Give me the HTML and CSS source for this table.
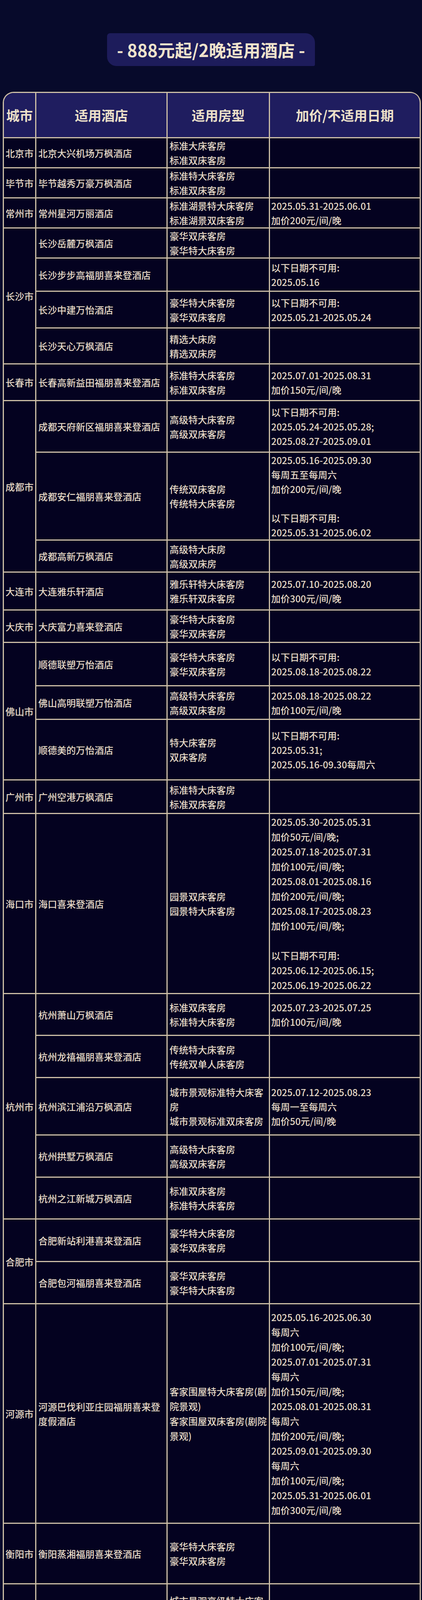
FILE: index.html
```html
<!DOCTYPE html>
<html lang="zh-CN">
<head>
<meta charset="utf-8">
<title>888元起/2晚适用酒店</title>
<link rel="stylesheet" href="styles.css">
</head>
<body>
<div class="page">
  <div class="title">- 888元起/2晚适用酒店 -</div>
  <table class="list">
    <colgroup>
      <col class="c-city"><col class="c-hotel"><col class="c-room"><col class="c-date">
    </colgroup>
    <thead>
      <tr class="head"><th>城市</th><th>适用酒店</th><th>适用房型</th><th>加价/不适用日期</th></tr>
    </thead>
    <tbody>
      <tr class="h73"><td class="city">北京市</td><td>北京大兴机场万枫酒店</td><td>标准大床客房<br>标准双床客房</td><td></td></tr>
      <tr class="h76"><td class="city">毕节市</td><td>毕节越秀万豪万枫酒店</td><td>标准特大床客房<br>标准双床客房</td><td></td></tr>
      <tr class="h76"><td class="city">常州市</td><td>常州星河万丽酒店</td><td>标准湖景特大床客房<br>标准湖景双床客房</td><td>2025.05.31-2025.06.01<br>加价200元/间/晚</td></tr>

      <tr class="h76"><td class="city" rowspan="4">长沙市</td><td>长沙岳麓万枫酒店</td><td>豪华双床客房<br>豪华特大床客房</td><td></td></tr>
      <tr class="h85"><td>长沙步步高福朋喜来登酒店</td><td></td><td>以下日期不可用:<br>2025.05.16</td></tr>
      <tr class="h94"><td>长沙中建万怡酒店</td><td>豪华特大床客房<br>豪华双床客房</td><td>以下日期不可用:<br>2025.05.21-2025.05.24</td></tr>
      <tr class="h92"><td>长沙天心万枫酒店</td><td>精选大床房<br>精选双床房</td><td></td></tr>

      <tr class="h94"><td class="city">长春市</td><td>长春高新益田福朋喜来登酒店</td><td>标准特大床客房<br>标准双床客房</td><td>2025.07.01-2025.08.31<br>加价150元/间/晚</td></tr>

      <tr class="h132"><td class="city" rowspan="3">成都市</td><td>成都天府新区福朋喜来登酒店</td><td>高级特大床客房<br>高级双床客房</td><td>以下日期不可用:<br>2025.05.24-2025.05.28;<br>2025.08.27-2025.09.01</td></tr>
      <tr class="h225"><td>成都安仁福朋喜来登酒店</td><td>传统双床客房<br>传统特大床客房</td><td>2025.05.16-2025.09.30<br>每周五至每周六<br>加价200元/间/晚<br><br>以下日期不可用:<br>2025.05.31-2025.06.02</td></tr>
      <tr class="h82"><td>成都高新万枫酒店</td><td>高级特大床房<br>高级双床房</td><td></td></tr>

      <tr class="h97"><td class="city">大连市</td><td>大连雅乐轩酒店</td><td>雅乐轩特大床客房<br>雅乐轩双床客房</td><td>2025.07.10-2025.08.20<br>加价300元/间/晚</td></tr>
      <tr class="h83"><td class="city">大庆市</td><td>大庆富力喜来登酒店</td><td>豪华特大床客房<br>豪华双床客房</td><td></td></tr>

      <tr class="h111"><td class="city" rowspan="3">佛山市</td><td>顺德联塑万怡酒店</td><td>豪华特大床客房<br>豪华双床客房</td><td>以下日期不可用:<br>2025.08.18-2025.08.22</td></tr>
      <tr class="h86"><td>佛山高明联塑万怡酒店</td><td>高级特大床客房<br>高级双床客房</td><td>2025.08.18-2025.08.22<br>加价100元/间/晚</td></tr>
      <tr class="h155"><td>顺德美的万怡酒店</td><td>特大床客房<br>双床客房</td><td>以下日期不可用:<br>2025.05.31;<br>2025.05.16-09.30每周六</td></tr>

      <tr class="h86"><td class="city">广州市</td><td>广州空港万枫酒店</td><td>标准特大床客房<br>标准双床客房</td><td></td></tr>
      <tr class="h461"><td class="city">海口市</td><td>海口喜来登酒店</td><td>园景双床客房<br>园景特大床客房</td><td class="tall">2025.05.30-2025.05.31<br>加价50元/间/晚;<br>2025.07.18-2025.07.31<br>加价100元/间/晚;<br>2025.08.01-2025.08.16<br>加价200元/间/晚;<br>2025.08.17-2025.08.23<br>加价100元/间/晚;<br><br>以下日期不可用:<br>2025.06.12-2025.06.15;<br>2025.06.19-2025.06.22</td></tr>

      <tr class="h107"><td class="city" rowspan="5">杭州市</td><td>杭州萧山万枫酒店</td><td>标准双床客房<br>标准特大床客房</td><td>2025.07.23-2025.07.25<br>加价100元/间/晚</td></tr>
      <tr class="h108"><td>杭州龙禧福朋喜来登酒店</td><td>传统特大床客房<br>传统双单人床客房</td><td></td></tr>
      <tr class="h147"><td>杭州滨江浦沿万枫酒店</td><td>城市景观标准特大床客房<br>城市景观标准双床客房</td><td>2025.07.12-2025.08.23<br>每周一至每周六<br>加价50元/间/晚</td></tr>
      <tr class="h108"><td>杭州拱墅万枫酒店</td><td>高级特大床客房<br>高级双床客房</td><td></td></tr>
      <tr class="h107"><td>杭州之江新城万枫酒店</td><td>标准双床客房<br>标准特大床客房</td><td></td></tr>

      <tr class="h109"><td class="city" rowspan="2">合肥市</td><td>合肥新站利港喜来登酒店</td><td>豪华特大床客房<br>豪华双床客房</td><td></td></tr>
      <tr class="h108"><td>合肥包河福朋喜来登酒店</td><td>豪华双床客房<br>豪华特大床客房</td><td></td></tr>

      <tr class="h562"><td class="city">河源市</td><td>河源巴伐利亚庄园福朋喜来登度假酒店</td><td class="tall">客家围屋特大床客房(剧院景观)<br>客家围屋双床客房(剧院景观)</td><td class="tall">2025.05.16-2025.06.30<br>每周六<br>加价100元/间/晚;<br>2025.07.01-2025.07.31<br>每周六<br>加价150元/间/晚;<br>2025.08.01-2025.08.31<br>每周六<br>加价200元/间/晚;<br>2025.09.01-2025.09.30<br>每周六<br>加价100元/间/晚;<br>2025.05.31-2025.06.01<br>加价300元/间/晚</td></tr>
      <tr class="h155"><td class="city">衡阳市</td><td>衡阳蒸湘福朋喜来登酒店</td><td>豪华特大床客房<br>豪华双床客房</td><td></td></tr>

      <tr class="h160"><td class="city" rowspan="3">湖州市</td><td>安吉万怡酒店</td><td>城市景观高级特大床客房<br>高级双床客房</td><td>以下日期不可用:<br>2025.07.15-2025.08.25</td></tr>
      <tr class="h504"><td>湖州南浔福朋喜来登酒店</td><td>高级特大床客房<br>高级双床客房</td><td class="tall">2025.05.16-2025.06.30<br>每周六<br>加价150元/间/晚;<br>2025.09.01-2025.09.30<br>每周六<br>加价150元/间/晚;<br>2025.07.01-2025.08.31<br>每周日至每周五<br>加价100元/间/晚;<br>2025.07.01-2025.08.31<br>每周六<br>加价250元/间/晚;</td></tr>
      <tr class="h202"><td>湖州福朋喜来登酒店</td><td>标准双床房<br>标准特大床房</td><td class="tall">2025.05.16-2025.09.30<br>每周六<br>加价50元/间/晚;<br>2025.05.31-2025.06.02<br>加价100元/间/晚</td></tr>

      <tr class="h203"><td class="city">惠州市</td><td>惠州白鹭湖雅居乐喜来登度假酒店</td><td>豪华园景双床客房<br>豪华园景特大床客房</td><td class="tall">2025.05.31-2025.06.01<br>加价180元/间/晚;<br>2025.07.13-2025.08.23<br>每周六<br>加价150元/间/晚</td></tr>

      <tr class="h92"><td class="city" rowspan="2">嘉兴市</td><td>平湖万怡酒店</td><td>听鸣特大床客房<br>听鸣双床客房</td><td>2025.05.31-2025.06.02<br>加价250元/间/晚</td></tr>
      <tr class="h92"><td>嘉兴福朋喜来登酒店</td><td>豪华城景双床客房</td><td>以下日期不可用:<br>2025.05.31-2025.06.01</td></tr>

      <tr class="h274"><td class="city">金华市</td><td>义乌万枫酒店</td><td>精选特大床客房<br>精选双床客房</td><td class="tall">2025.05.16-2025.09.30<br>每周五至每周六<br>加价50元/间/晚;<br><br>以下日期不可用:<br>2025.05.31-2025.06.04<br>2025.09.30</td></tr>
      <tr class="h91"><td class="city">开封市</td><td>开封大宏喜来登酒店</td><td>豪华特大床房<br>豪华双床房</td><td>以下日期不可用:<br>2025.07.20-2025.08.20</td></tr>
      <tr class="h89"><td class="city">昆明市</td><td>昆明喜来登酒店</td><td>豪华双床客房</td><td>2025.07.15-2025.08.15<br>加价100元/间/晚</td></tr>
      <tr class="h92"><td class="city">柳州市</td><td>柳州三江万怡酒店</td><td>豪华庭院特大床客房<br>豪华庭院双床客房</td><td></td></tr>
      <tr class="h244"><td class="city">洛阳市</td><td>洛阳万怡酒店</td><td>豪华特大床客房<br>豪华双床客房</td><td class="tall">2025.07.15-2025.08.20<br>加价100元/间/晚;<br><br>以下日期不可用:<br>2025.05.31-2025.06.01;<br>2025.09.30</td></tr>

      <tr class="h208"><td class="city" rowspan="2">南昌市</td><td>南昌万怡酒店</td><td>豪华特大床客房<br>豪华双床客房</td><td class="tall">以下日期不可用:<br>2025.05.31-2025.06.02;<br>2025.06.06-2025.06.09;<br>2025.05.16-2025.05.18;<br>2025.05.21-2025.05.24</td></tr>
      <tr class="h198"><td>南昌华侨城福朋喜来登酒店</td><td>舒适双床客房<br>舒适特大床客房</td><td class="tall">以下日期不可用:<br>2025.05.20-2025.05.24;<br>2025.05.31-2025.06.02;<br>2025.09.30</td></tr>

      <tr class="h100"><td class="city">南通市</td><td>南通万怡酒店</td><td>标准特大床客房<br>标准双床客房</td><td></td></tr>
      <tr class="h131"><td class="city">秦皇岛市</td><td>秦皇岛和信基业万怡酒店</td><td>豪华特大床客房<br>豪华双床客房</td><td>以下日期不可用:<br>2025.05.31-2025.06.01;<br>2025.07.04-2025.08.23</td></tr>

      <tr class="h100"><td class="city" rowspan="2">青岛市</td><td>青岛金茂源宿酒店</td><td>标准特大床客房<br>标准双床客房</td><td>2025.07.01-2025.08.31<br>加价100元/间/晚</td></tr>
      <tr class="h600"><td>青岛西海岸威斯汀酒店</td><td>活力特大床客房<br>活力双床客房</td><td class="tall">2025.07.11-2025.08.23<br>加价150元/间/晚<br><br>以下日期不可用:<br>2025.05.18-2025.05.20;<br>2025.06.25-2025.06.27;<br>2025.06.30-2025.07.03;<br>2025.07.18-2025.07.20;<br>2025.07.26-2025.07.28;<br>2025.08.02;<br>2025.08.09;<br>2025.08.25-2025.08.27;<br>2025.09.01-2025.09.03;<br>2025.09.15-2025.09.22;<br>2025.09.26-2025.09.28</td></tr>

      <tr class="h308"><td class="city">琼中黎族苗族自治县</td><td>海南琼中福朋喜来登酒店</td><td>豪华特大床客房<br>豪华双床客房</td><td class="tall">2025.05.16-2025.05.30<br>每周六<br>加价50元/间/晚;<br>2025.06.02-2025.09.29<br>每周六<br>加价50元/间/晚;<br>2025.05.31-2025.06.01<br>加价100元/间/晚</td></tr>
      <tr class="h145"><td class="city">汕尾市</td><td>汕尾海丰万怡酒店</td><td>豪华特大床客房<br>豪华双床客房</td><td class="tall">以下日期不可用:<br>2025.05.31-2025.06.01;<br>2025.09.30</td></tr>
      <tr class="h100"><td class="city">上海市</td><td>上海绿地万怡酒店</td><td>豪华特大床客房<br>豪华双床客房</td><td></td></tr>
    </tbody>
  </table>
</div>
</body>
</html>
```

FILE: styles.css
```css
* {
  box-sizing: border-box;
}

html,
body {
  margin: 0;
  padding: 0;
}

body {
  background: #070a2b;
  color: #e6dac6;
  font-family: "Noto Sans CJK SC", "Noto Sans", "DejaVu Sans", sans-serif;
}

.page {
  padding-top: 85px;
  padding-bottom: 40px;
}

.title {
  width: 532px;
  height: 84px;
  margin: 0 auto 66px;
  background: #1d1c5b;
  border-radius: 8px 24px 4px 24px;
  color: #efe3cc;
  font-size: 44px;
  font-weight: 700;
  line-height: 84px;
  text-align: center;
  white-space: nowrap;
}

.list {
  width: 1070px;
  margin-left: 7px;
  border-collapse: separate;
  border-spacing: 0;
  table-layout: fixed;
  border-top: 3px solid #cdbfa6;
  border-left: 3px solid #cdbfa6;
  border-radius: 28px 28px 0 0;
}

.c-city { width: 83px; }
.c-hotel { width: 336px; }
.c-room { width: 262px; }
.c-date { width: 386px; }

.list th,
.list td {
  border-right: 3px solid #cdbfa6;
  border-bottom: 3px solid #cdbfa6;
  vertical-align: middle;
}

.list th {
  height: 116px;
  background: #1f1d5f;
  color: #ece0c9;
  font-size: 34px;
  font-weight: 700;
  text-align: center;
  padding: 0;
}

.list th:first-child {
  border-top-left-radius: 25px;
}

.list th:last-child {
  border-top-right-radius: 25px;
}

.list td {
  background: #040220;
  font-size: 24px;
  font-weight: 500;
  line-height: 37px;
  padding: 0 0 0 5px;
  text-align: left;
}

.list td:last-child {
  padding-left: 3px;
}

.list td.tall {
  line-height: 38px;
}

.list td.city {
  text-align: center;
  padding: 0 2px;
}

.h73 { height: 73px; }
.h76 { height: 76px; }
.h82 { height: 82px; }
.h83 { height: 83px; }
.h85 { height: 85px; }
.h86 { height: 86px; }
.h89 { height: 89px; }
.h91 { height: 91px; }
.h92 { height: 92px; }
.h94 { height: 94px; }
.h97 { height: 97px; }
.h100 { height: 100px; }
.h107 { height: 107px; }
.h108 { height: 108px; }
.h109 { height: 109px; }
.h111 { height: 111px; }
.h131 { height: 131px; }
.h132 { height: 132px; }
.h145 { height: 145px; }
.h147 { height: 147px; }
.h155 { height: 155px; }
.h160 { height: 160px; }
.h198 { height: 198px; }
.h202 { height: 202px; }
.h203 { height: 203px; }
.h208 { height: 208px; }
.h225 { height: 225px; }
.h244 { height: 244px; }
.h274 { height: 274px; }
.h308 { height: 308px; }
.h461 { height: 461px; }
.h504 { height: 504px; }
.h562 { height: 562px; }
.h600 { height: 600px; }
```
